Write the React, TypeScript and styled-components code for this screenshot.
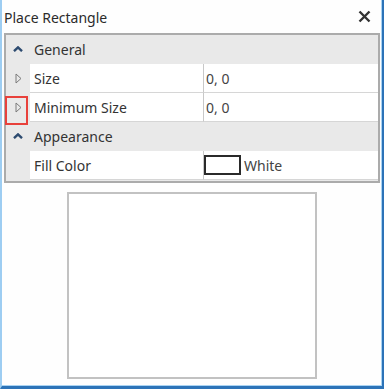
import React from "react";
import styled, { createGlobalStyle } from "styled-components";

const Global = createGlobalStyle`
  html, body { margin: 0; padding: 0; background: #ffffff; }
  * { box-sizing: border-box; }
`;

const Window = styled.div`
  width: 384px;
  height: 389px;
  background: #fefefe;
  border-left: 2px solid #9dcdf2;
  border-right: 2px solid #2c73b8;
  border-bottom: 3px solid #2c73b8;
  box-shadow: inset -1px 0 0 #a9d3f3, inset 0 -1px 0 #a9d3f3;
  display: flex;
  flex-direction: column;
  font-family: "Noto Sans", "Open Sans", sans-serif;
  color: #333;
`;

const TitleBar = styled.div`
  height: 33px;
  display: flex;
  align-items: center;
  justify-content: space-between;
  padding: 0 11px 0 2px;
`;

const Title = styled.div`
  font-size: 14px;
  color: #2b2b2b;
  padding-top: 1px;
`;

const Close = styled.div`
  width: 13px;
  height: 13px;
  display: flex;
`;

const Grid = styled.div`
  margin: 0 2px;
  border: 2px solid #ababab;
  background: #e9e9e9;
  padding-bottom: 1px;
  display: flex;
  flex-direction: column;
`;

const Row = styled.div`
  height: 29px;
  display: flex;
`;

const Gutter = styled.div`
  position: relative;
  width: 24px;
  flex: none;
  display: flex;
  align-items: center;
  justify-content: center;
`;

const CategoryLabel = styled.div`
  flex: 1;
  display: flex;
  align-items: center;
  padding-left: 4px;
  font-size: 14px;
  color: #333;
  border-bottom: 1px solid #e9e9e9;
`;

const NameCell = styled.div`
  width: 174px;
  flex: none;
  background: #fff;
  border-right: 1px solid #c8c8c8;
  border-bottom: 1px solid #d6d6d6;
  display: flex;
  align-items: center;
  padding-left: 4px;
  font-size: 14px;
  color: #333;
`;

const ValueCell = styled.div`
  flex: 1;
  background: #fff;
  border-bottom: 1px solid #d6d6d6;
  display: flex;
  align-items: center;
  padding-left: 2px;
  font-size: 14px;
  color: #444;
  gap: 3px;
`;

const Swatch = styled.div`
  width: 37px;
  height: 20px;
  margin-left: -2px;
  border: 2px solid #2a2a2a;
  background: #fff;
`;

const Highlight = styled.div`
  position: absolute;
  left: -1px;
  top: 3px;
  width: 23px;
  height: 29px;
  border: 2px solid #e8413b;
`;

const PreviewArea = styled.div`
  flex: 1;
  display: flex;
  justify-content: center;
  padding-top: 9px;
`;

const Preview = styled.div`
  width: 250px;
  height: 187px;
  border: 2px solid #c2c2c2;
  background: #fff;
`;

const CaretUp = () => (
  <svg width="10" height="6" viewBox="0 0 10 6" style={{ marginTop: -2 }}>
    <polyline points="1,5.2 5,1.4 9,5.2" fill="none" stroke="#2d4b70" strokeWidth="2.4" />
  </svg>
);

const TriRight = () => (
  <svg width="7" height="11" viewBox="0 0 7 11">
    <polygon points="1,1 6,5.5 1,10" fill="none" stroke="#7a7a7a" strokeWidth="1" />
  </svg>
);

type Prop = { name: string; value: string; color?: boolean; highlight?: boolean };

const Category: React.FC<{ label: string }> = ({ label }) => (
  <Row>
    <Gutter>
      <CaretUp />
    </Gutter>
    <CategoryLabel>{label}</CategoryLabel>
  </Row>
);

const PropRow: React.FC<{ p: Prop; expandable?: boolean }> = ({ p, expandable }) => (
  <Row>
    <Gutter>
      {expandable && <TriRight />}
      {p.highlight && <Highlight />}
    </Gutter>
    <NameCell>{p.name}</NameCell>
    <ValueCell>
      {p.color && <Swatch />}
      {p.value}
    </ValueCell>
  </Row>
);

export default function App() {
  return (
    <>
      <Global />
      <Window>
        <TitleBar>
          <Title>Place Rectangle</Title>
          <Close>
            <svg width="13" height="13" viewBox="0 0 13 13">
              <path d="M1.5 1.5 L11.5 11.5 M11.5 1.5 L1.5 11.5" stroke="#333" strokeWidth="2.4" />
            </svg>
          </Close>
        </TitleBar>
        <Grid>
          <Category label="General" />
          <PropRow p={{ name: "Size", value: "0, 0" }} expandable />
          <PropRow p={{ name: "Minimum Size", value: "0, 0", highlight: true }} expandable />
          <Category label="Appearance" />
          <PropRow p={{ name: "Fill Color", value: "White", color: true }} />
        </Grid>
        <PreviewArea>
          <Preview />
        </PreviewArea>
      </Window>
    </>
  );
}
